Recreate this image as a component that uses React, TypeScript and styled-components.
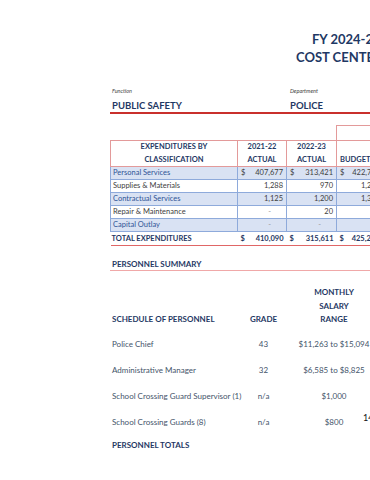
import styled, { createGlobalStyle } from "styled-components";

const GlobalStyle = createGlobalStyle`
  html, body {
    margin: 0;
    padding: 0;
    background: #fff;
    overflow: hidden;
  }
  body {
    width: 370px;
    height: 480px;
    font-family: Lato, "Open Sans", "Liberation Sans", sans-serif;
  }
`;

type ExpRow = {
  label: string;
  a: string;
  b: string;
  c: string;
  dollar?: boolean;
};

const expenditures: ExpRow[] = [
  { label: "Personal Services", a: "407,677", b: "313,421", c: "422,790", dollar: true },
  { label: "Supplies & Materials", a: "1,288", b: "970", c: "1,250" },
  { label: "Contractual Services", a: "1,125", b: "1,200", c: "1,300" },
  { label: "Repair & Maintenance", a: "-", b: "20", c: "-" },
  { label: "Capital Outlay", a: "-", b: "-", c: "-" },
];

const staff = [
  { title: "Police Chief", grade: "43", range: "$11,263 to $15,094" },
  { title: "Administrative Manager", grade: "32", range: "$6,585 to $8,825" },
  { title: "School Crossing Guard Supervisor (1)", grade: "n/a", range: "$1,000" },
  { title: "School Crossing Guards (8)", grade: "n/a", range: "$800", note: "14" },
];

const App: React.FC = () => {
  return (
    <>
      <GlobalStyle />
      <Page>
        <Title>
          <TitleLine $indent={202}>FY 2024-25</TitleLine>
          <TitleLine $indent={186}>COST CENTER</TitleLine>
        </Title>

        <InfoRow>
          <InfoCell>
            <Caption>Function</Caption>
            <InfoValue>PUBLIC SAFETY</InfoValue>
          </InfoCell>
          <InfoCell>
            <Caption>Department</Caption>
            <InfoValue>POLICE</InfoValue>
          </InfoCell>
        </InfoRow>

        <ExpTable>
          <colgroup>
            <col style={{ width: 127 }} />
            <col style={{ width: 49 }} />
            <col style={{ width: 50 }} />
            <col style={{ width: 34 }} />
          </colgroup>
          <thead>
            <tr>
              <GroupBlank colSpan={3} />
              <GroupCell />
            </tr>
            <tr>
              <HeadCell>
                EXPENDITURES BY
                <br />
                CLASSIFICATION
              </HeadCell>
              <HeadCell>
                2021-22
                <br />
                ACTUAL
              </HeadCell>
              <HeadCell>
                2022-23
                <br />
                ACTUAL
              </HeadCell>
              <HeadCell $align="left">
                &nbsp;
                <br />
                BUDGET
              </HeadCell>
            </tr>
          </thead>
          <tbody>
            {expenditures.map((row, i) => (
              <DataRow key={row.label} $shaded={i % 2 === 0}>
                <LabelCell $shaded={i % 2 === 0}>{row.label}</LabelCell>
                <AmountCell>
                  <Amount $dash={row.a === "-"}>
                    <span>{row.dollar ? "$" : ""}</span>
                    <span>{row.a}</span>
                  </Amount>
                </AmountCell>
                <AmountCell>
                  <Amount $dash={row.b === "-"}>
                    <span>{row.dollar ? "$" : ""}</span>
                    <span>{row.b}</span>
                  </Amount>
                </AmountCell>
                <AmountCell>
                  <Amount $dash={row.c === "-"} $wide>
                    <span>{row.dollar ? "$" : ""}</span>
                    <span>{row.c}</span>
                  </Amount>
                </AmountCell>
              </DataRow>
            ))}
            <TotalRow>
              <TotalCell>TOTAL EXPENDITURES</TotalCell>
              <TotalCell>
                <Amount>
                  <span>$</span>
                  <span>410,090</span>
                </Amount>
              </TotalCell>
              <TotalCell>
                <Amount>
                  <span>$</span>
                  <span>315,611</span>
                </Amount>
              </TotalCell>
              <TotalCell>
                <Amount $wide>
                  <span>$</span>
                  <span>425,240</span>
                </Amount>
              </TotalCell>
            </TotalRow>
          </tbody>
        </ExpTable>

        <SectionHeading>PERSONNEL SUMMARY</SectionHeading>

        <StaffGrid>
          <StaffHead $align="left">SCHEDULE OF PERSONNEL</StaffHead>
          <StaffHead>GRADE</StaffHead>
          <StaffHead>
            MONTHLY
            <br />
            SALARY
            <br />
            RANGE
          </StaffHead>
          {staff.map((s) => (
            <StaffRow key={s.title}>
              <StaffCell $align="left">{s.title}</StaffCell>
              <StaffCell>{s.grade}</StaffCell>
              <StaffCell>{s.range}</StaffCell>
              {s.note && <PageNote>{s.note}</PageNote>}
            </StaffRow>
          ))}
          <TotalsLabel>PERSONNEL TOTALS</TotalsLabel>
        </StaffGrid>
      </Page>
    </>
  );
};

export default App;

const navy = "#1f3864";

const Page = styled.div`
  width: 260px;
  padding: 30px 0 0 110px;
`;

const Title = styled.div`
  display: flex;
  flex-direction: column;
  white-space: nowrap;
`;

const TitleLine = styled.div<{ $indent: number }>`
  padding-left: ${(p) => p.$indent}px;
  font-size: 13px;
  line-height: 18px;
  font-weight: 700;
  color: ${navy};
`;

const InfoRow = styled.div`
  display: grid;
  grid-template-columns: 178px 1fr;
  margin-top: 21px;
  border-bottom: 2px solid #c9302c;
  padding-left: 2px;
`;

const InfoCell = styled.div`
  display: flex;
  flex-direction: column;
`;

const Caption = styled.div`
  font-size: 5.5px;
  line-height: 8px;
  font-style: italic;
  color: #444;
  margin-bottom: 5px;
`;

const InfoValue = styled.div`
  font-size: 9.5px;
  line-height: 12px;
  font-weight: 700;
  color: ${navy};
`;

const ExpTable = styled.table`
  margin-top: 11px;
  border-collapse: collapse;
  table-layout: fixed;
  width: 260px;
  font-size: 7.5px;
  white-space: nowrap;
`;

const GroupBlank = styled.th`
  height: 14px;
  padding: 0;
`;

const GroupCell = styled.th`
  height: 14px;
  padding: 0;
  border-top: 1px solid #e39a9a;
  border-left: 1px solid #e39a9a;
`;

const HeadCell = styled.th<{ $align?: string }>`
  height: 25px;
  padding: 0 3px;
  border: 1px solid #e39a9a;
  color: ${navy};
  font-weight: 700;
  line-height: 12.5px;
  text-align: ${(p) => p.$align || "center"};
  vertical-align: middle;
  overflow: visible;
`;

const DataRow = styled.tr<{ $shaded: boolean }>`
  background: ${(p) => (p.$shaded ? "#d9e2f3" : "#fff")};
`;

const LabelCell = styled.td<{ $shaded: boolean }>`
  height: 12px;
  padding: 0 2px;
  border: 1px solid #8eaadb;
  color: ${(p) => (p.$shaded ? "#2f5496" : "#404040")};
  line-height: 12px;
`;

const AmountCell = styled.td`
  height: 12px;
  padding: 0 3px;
  border: 1px solid #8eaadb;
  border-right: none;
  color: #404040;
  line-height: 12px;
  overflow: visible;
`;

const Amount = styled.div<{ $dash?: boolean; $wide?: boolean }>`
  display: flex;
  justify-content: space-between;
  width: ${(p) => (p.$wide ? "40px" : "auto")};
  padding-right: ${(p) => (p.$dash ? "12px" : "0")};
  color: ${(p) => (p.$dash ? "#999" : "inherit")};
`;

const TotalRow = styled.tr`
  border-bottom: 1px solid #e06666;
`;

const TotalCell = styled.td`
  height: 13px;
  padding: 0 3px;
  font-weight: 700;
  color: ${navy};
  line-height: 13px;
  overflow: visible;
  &:first-child {
    padding-left: 1px;
  }
`;

const SectionHeading = styled.div`
  margin-top: 12px;
  padding-left: 2px;
  font-size: 8px;
  line-height: 12px;
  font-weight: 700;
  color: ${navy};
  border-bottom: 1px solid #f0a8a8;
`;

const StaffGrid = styled.div`
  display: grid;
  grid-template-columns: 128px 47px 94px;
  margin-top: 15px;
  padding-left: 2px;
  font-size: 8px;
  white-space: nowrap;
`;

const StaffHead = styled.div<{ $align?: string }>`
  align-self: end;
  padding-bottom: 4px;
  text-align: ${(p) => p.$align || "center"};
  font-weight: 700;
  color: ${navy};
  line-height: 13.5px;
`;

const StaffRow = styled.div`
  position: relative;
  grid-column: 1 / -1;
  display: grid;
  grid-template-columns: subgrid;
  height: 26px;
  align-items: center;
`;

const StaffCell = styled.div<{ $align?: string }>`
  text-align: ${(p) => p.$align || "center"};
  color: #44546a;
`;

const PageNote = styled.span`
  position: absolute;
  left: 251px;
  top: 3px;
  font-size: 9px;
  color: #111;
`;

const TotalsLabel = styled.div`
  grid-column: 1 / -1;
  height: 20px;
  line-height: 20px;
  font-weight: 700;
  color: ${navy};
`;
